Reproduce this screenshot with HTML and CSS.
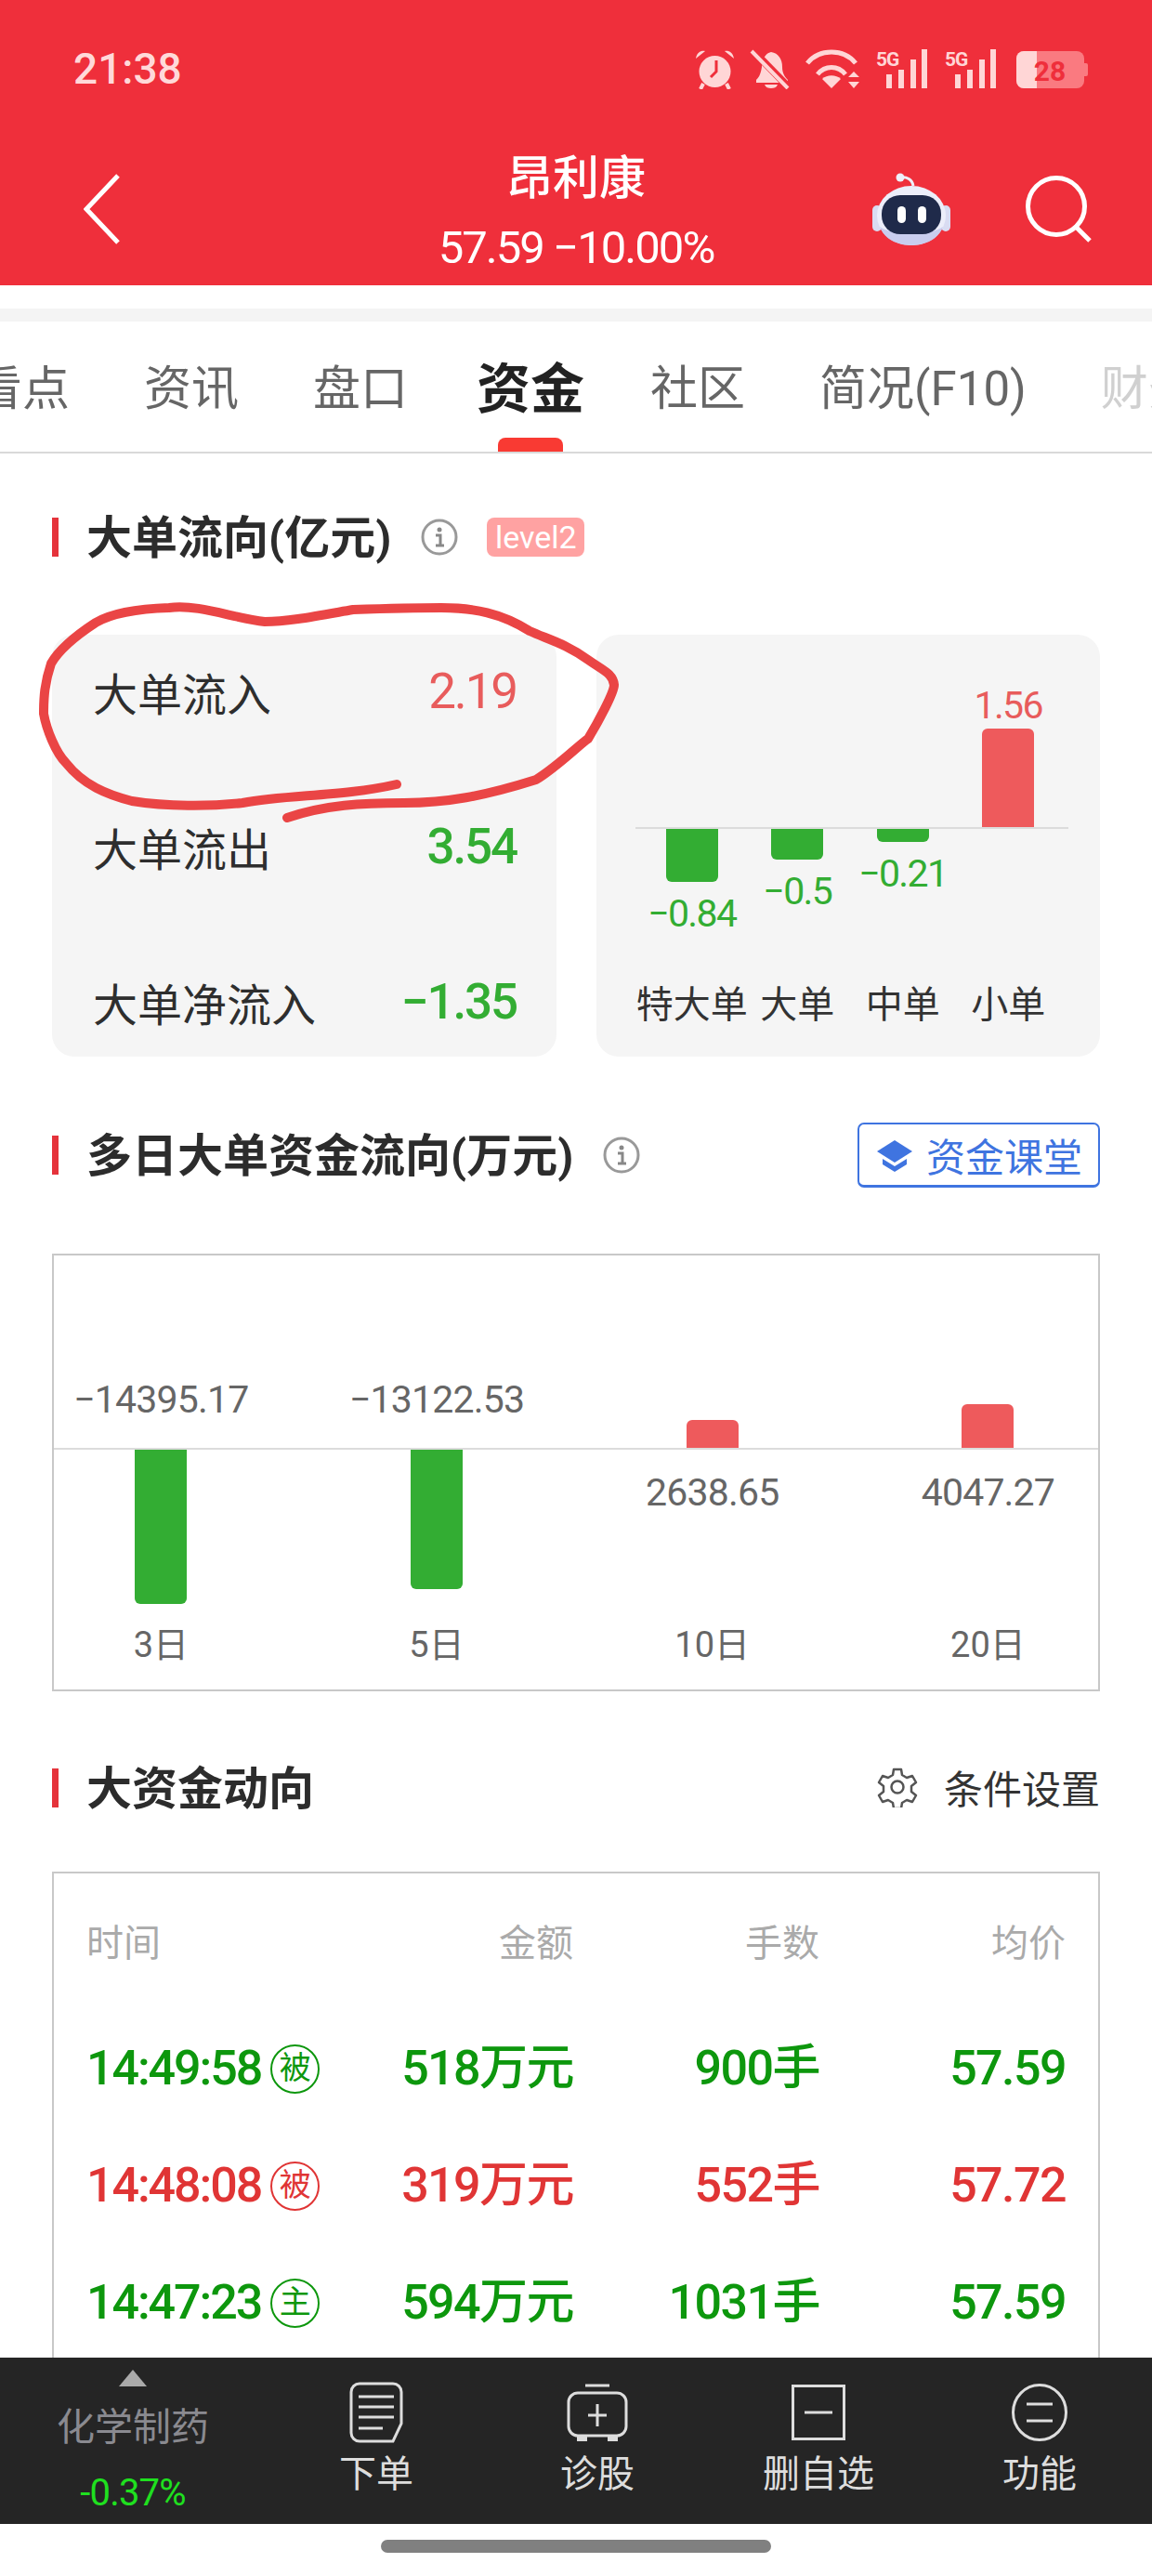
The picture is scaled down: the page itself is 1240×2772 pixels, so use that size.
FILE: index.html
```html
<!DOCTYPE html>
<html lang="zh-CN">
<head>
<meta charset="utf-8">
<title>昂利康</title>
<link rel="stylesheet" href="styles.css">
</head>
<body>
<div class="page">
  <header class="hero">
    <div class="status">
      <span class="clock">21:38</span>
      <div class="status-icons">
        <svg class="si" width="43" height="43" viewBox="0 0 43 43"><circle cx="21.5" cy="24" r="17" fill="#ffd6d6"/><path d="M1 10C2 3 7 1 11 2ZM42 10C41 3 36 1 32 2Z" fill="#ffd6d6"/><path d="M9 37 6 43M34 37 37 43" stroke="#ffd6d6" stroke-width="4"/><path d="M23 12V24L17 30" fill="none" stroke="#ef2f3b" stroke-width="3"/></svg>
        <svg class="si" width="43" height="43" viewBox="0 0 43 43"><path d="M23 3c8 1 12 8 12 16 0 6 2 10 6 14v3H7v-3c4-4 5-8 6-14 0-8 4-15 10-16Z" fill="#ffd6d6"/><path d="M16 38h14c-1 3-4 4-7 4s-6-1-7-4Z" fill="#ffd6d6"/><path d="M3 1 42 41" stroke="#ef2f3b" stroke-width="8"/><path d="M2 2 41 42" stroke="#ffd6d6" stroke-width="4"/></svg>
        <svg class="si" width="61" height="43" viewBox="0 0 61 43"><path d="M3 15C16 -1 42 -1 55 15M14 27C22 17 36 17 44 27" fill="none" stroke="#ffd6d6" stroke-width="5"/><path d="M19 32C24 27 34 27 39 32L29 42Z" fill="#ffd6d6"/><path d="M53 24 59 30H47ZM53 42 47 35H59Z" fill="#ffd6d6"/></svg>
        <svg class="si" width="56" height="43" viewBox="0 0 56 43"><text class="fiveg" x="0" y="18">5G</text><path d="M11 27h6v15h-6zM24 22h6v20h-6zM37 11h6v31h-6zM49 0h6v42h-6z" fill="#ffd6d6"/></svg>
        <svg class="si" width="58" height="43" viewBox="-2 0 58 43"><text class="fiveg" x="0" y="18">5G</text><path d="M11 27h6v15h-6zM24 22h6v20h-6zM37 11h6v31h-6zM49 0h6v42h-6z" fill="#ffd6d6"/></svg>
        <svg class="si" width="82" height="43" viewBox="0 0 82 43"><rect x="5" y="2" width="73" height="40" rx="8" fill="#fa7a80"/><path d="M13 2h14v40H13a8 8 0 0 1-8-8V10a8 8 0 0 1 8-8Z" fill="#ffd6d6"/><path d="M78 15h2a2 2 0 0 1 2 2v10a2 2 0 0 1-2 2h-2Z" fill="#fa7a80"/><text class="batt" x="41" y="34" text-anchor="middle">28</text></svg>
      </div>
    </div>
    <div class="navbar">
      <svg class="back" width="40" height="76" viewBox="0 0 40 76"><path d="M37 2 3 38 37 74" fill="none" stroke="#fff" stroke-width="5"/></svg>
      <div class="stock">
        <div class="stock-name">昂利康</div>
        <div class="stock-price">57.59 −10.00%</div>
      </div>
      <div class="nav-right">
        <svg width="84" height="78" viewBox="0 0 84 78"><circle cx="30" cy="5" r="4.500" fill="#eef0fb"/><path d="M30 5c7-1 13 2 14 9" fill="none" stroke="#eef0fb" stroke-width="3"/><rect x="0" y="35" width="10" height="28" rx="5" fill="#d9dcf2"/><rect x="74" y="35" width="10" height="28" rx="5" fill="#d9dcf2"/><ellipse cx="42" cy="46" rx="37" ry="32" fill="#eceefa"/><path d="M8 58c5 14 20 20 34 20s29-6 34-20c-10 9-58 9-68 0Z" fill="#c9cdee"/><rect x="10" y="24" width="64" height="42" rx="20" fill="#1f2a4a"/><rect x="27" y="36" width="9" height="18" rx="4.500" fill="#fff"/><rect x="49" y="36" width="9" height="18" rx="4.500" fill="#fff"/></svg>
        <svg width="72" height="72" viewBox="0 0 72 72"><circle cx="33" cy="33" r="30.500" fill="none" stroke="#fff" stroke-width="5"/><path d="M54 55 69 70" stroke="#fff" stroke-width="5"/></svg>
      </div>
    </div>
  </header>

  <div class="strip"></div>

  <nav class="tabs">
    <span class="tab">看点</span>
    <span class="tab">资讯</span>
    <span class="tab">盘口</span>
    <span class="tab tab-on">资金</span>
    <span class="tab">社区</span>
    <span class="tab">简况(F10)</span>
    <span class="tab tab-fade">财务</span>
  </nav>

  <section class="sec sec-first">
    <div class="head">
      <h2 class="head-title">大单流向(亿元)</h2>
      <svg class="info" width="40" height="40" viewBox="0 0 40 40"><circle cx="20" cy="20" r="18" fill="none" stroke="#999" stroke-width="3"/><circle cx="20" cy="12" r="2.500" fill="#888"/><path d="M16 18h5v11M16 29h9" fill="none" stroke="#888" stroke-width="3"/></svg>
      <span class="badge">level2</span>
    </div>
    <div class="cards">
      <div class="card card-list">
        <div class="stat"><span>大单流入</span><b class="v-red">2.19</b></div>
        <div class="stat"><span>大单流出</span><b class="v-green">3.54</b></div>
        <div class="stat"><span>大单净流入</span><b class="v-green">−1.35</b></div>
      </div>
      <div class="card card-chart">
        <div class="mini-row mini-up">
          <div class="mini-cell"></div>
          <div class="mini-cell"></div>
          <div class="mini-cell"></div>
          <div class="mini-cell"><span class="mini-val c-red">1.56</span><i class="bar bar-red" style="height:106px"></i></div>
        </div>
        <div class="mini-line"></div>
        <div class="mini-row mini-down">
          <div class="mini-cell"><i class="bar bar-green" style="height:57px"></i><span class="mini-val c-green">−0.84</span></div>
          <div class="mini-cell"><i class="bar bar-green" style="height:33px"></i><span class="mini-val c-green">−0.5</span></div>
          <div class="mini-cell"><i class="bar bar-green" style="height:14px"></i><span class="mini-val c-green">−0.21</span></div>
          <div class="mini-cell"></div>
        </div>
        <div class="mini-row mini-axis">
          <span>特大单</span><span>大单</span><span>中单</span><span>小单</span>
        </div>
      </div>
    </div>
  </section>

  <section class="sec sec-second">
    <div class="head">
      <h2 class="head-title">多日大单资金流向(万元)</h2>
      <svg class="info" width="40" height="40" viewBox="0 0 40 40"><circle cx="20" cy="20" r="18" fill="none" stroke="#999" stroke-width="3"/><circle cx="20" cy="12" r="2.500" fill="#888"/><path d="M16 18h5v11M16 29h9" fill="none" stroke="#888" stroke-width="3"/></svg>
      <a class="course">
        <svg width="40" height="40" viewBox="0 0 40 40"><path d="M20 4 39 16 20 28 1 16Z" fill="#3f74e0"/><path d="M7 24v6l13 8 13-8v-6L20 32Z" fill="#3f74e0"/></svg>
        <span>资金课堂</span>
      </a>
    </div>
    <div class="multi">
      <div class="multi-row multi-up">
        <div class="multi-cell"><span class="multi-val multi-neg">−14395.17</span></div>
        <div class="multi-cell"><span class="multi-val multi-neg">−13122.53</span></div>
        <div class="multi-cell"><i class="bar bar-red" style="height:30px"></i></div>
        <div class="multi-cell"><i class="bar bar-red" style="height:47px"></i></div>
      </div>
      <div class="multi-line"></div>
      <div class="multi-row multi-down">
        <div class="multi-cell"><i class="bar bar-green" style="height:166px"></i></div>
        <div class="multi-cell"><i class="bar bar-green" style="height:150px"></i></div>
        <div class="multi-cell"><span class="multi-val multi-pos">2638.65</span></div>
        <div class="multi-cell"><span class="multi-val multi-pos">4047.27</span></div>
      </div>
      <div class="multi-row multi-axis">
        <span>3日</span><span>5日</span><span>10日</span><span>20日</span>
      </div>
    </div>
  </section>

  <section class="sec sec-third">
    <div class="head">
      <h2 class="head-title">大资金动向</h2>
      <div class="setting">
        <svg width="44" height="44" viewBox="0 0 44 44"><path d="M18 3h8l1 6 5 3 6-2 4 7-5 4v6l5 4-4 7-6-2-5 3-1 6h-8l-1-6-5-3-6 2-4-7 5-4v-6l-5-4 4-7 6 2 5-3Z" fill="none" stroke="#555" stroke-width="2.500" stroke-linejoin="round"/><circle cx="22" cy="22" r="6.500" fill="none" stroke="#555" stroke-width="2.500"/></svg>
        <span>条件设置</span>
      </div>
    </div>
    <div class="flow">
      <div class="flow-row flow-head"><span class="cell-l">时间</span><span>金额</span><span>手数</span><span>均价</span></div>
      <div class="flow-row flow-data c-flow-green"><span class="cell-l">14:49:58<em class="tag">被</em></span><span>518万元</span><span>900手</span><span>57.59</span></div>
      <div class="flow-row flow-data c-flow-red"><span class="cell-l">14:48:08<em class="tag">被</em></span><span>319万元</span><span>552手</span><span>57.72</span></div>
      <div class="flow-row flow-data c-flow-green"><span class="cell-l">14:47:23<em class="tag">主</em></span><span>594万元</span><span>1031手</span><span>57.59</span></div>
    </div>
  </section>

  <svg class="scribble" width="1240" height="2772" viewBox="0 0 1240 2772"><path d="M309 880C350 866 390 864 435 864S520 857 577 839C600 825 625 800 633 795C645 775 661 745 661 737C660 725 650 722 633 710C610 693 590 688 570 679C540 660 510 654 475 654C440 654 410 655 380 656C340 663 310 669 285 669C250 665 215 650 182 654C150 655 120 660 103 670C80 685 63 700 55 714C48 735 47 750 47 768C50 785 60 810 71 821C90 845 115 855 142 862C180 868 225 868 261 864C310 855 370 857 427 844" fill="none" stroke="#ea4545" stroke-width="10" stroke-linecap="round"/></svg>

  <footer class="foot">
    <div class="tabbar">
      <div class="sector">
        <i class="sector-arrow"></i>
        <span class="sector-name">化学制药</span>
        <span class="sector-val">-0.37%</span>
      </div>
      <div class="tb-item">
        <svg class="tb-icon" width="58" height="66" viewBox="0 0 58 66"><path d="M11 2h36a9 9 0 0 1 9 9v34l-9 19H11a9 9 0 0 1-9-9V11a9 9 0 0 1 9-9Z" fill="none" stroke="#ddd" stroke-width="3"/><path d="M10 16h38M10 27h38M10 38h38M10 50h26" stroke="#ddd" stroke-width="3"/></svg>
        <span>下单</span>
      </div>
      <div class="tb-item">
        <svg class="tb-icon" width="66" height="62" viewBox="0 0 66 62"><path d="M20 2h26" stroke="#ddd" stroke-width="3"/><rect x="2" y="10" width="62" height="46" rx="10" fill="none" stroke="#ddd" stroke-width="3"/><path d="M33 22v24M23 34h20" stroke="#ddd" stroke-width="3"/><path d="M11 56h11v6H11zM44 56h11v6H44z" fill="#ddd"/></svg>
        <span>诊股</span>
      </div>
      <div class="tb-item">
        <svg class="tb-icon" width="58" height="60" viewBox="0 0 58 60"><rect x="1.500" y="1.500" width="55" height="57" fill="none" stroke="#ddd" stroke-width="3"/><path d="M14 30h30" stroke="#ddd" stroke-width="3"/></svg>
        <span>删自选</span>
      </div>
      <div class="tb-item">
        <svg class="tb-icon" width="60" height="62" viewBox="0 0 60 62"><ellipse cx="30" cy="31" rx="28.500" ry="29.500" fill="none" stroke="#ddd" stroke-width="3"/><path d="M16 22h28M16 40h28" stroke="#ddd" stroke-width="3"/></svg>
        <span>功能</span>
      </div>
    </div>
    <div class="home"><i class="home-bar"></i></div>
  </footer>
</div>
</body>
</html>
```
FILE: styles.css
```css
* { box-sizing: border-box; }
html, body { margin: 0; padding: 0; background: #fff; }
body { font-family: Roboto, "Noto Sans CJK SC", sans-serif; color: #333; }
svg { display: block; flex: none; }
i, em { font-style: normal; display: block; }
h2 { margin: 0; }

.page { position: relative; width: 1240px; height: 2772px; overflow: hidden; background: #fff; }

.hero { height: 307px; background: #ef2f3b; color: #fff; }
.status { height: 148px; display: flex; align-items: center; justify-content: space-between; padding: 0 69px 0 79px; }
.clock { font-size: 46px; font-weight: 500; color: #ffd9d9; }
.status-icons { display: flex; gap: 16px; align-items: center; }
.fiveg { font: 700 21px Roboto, sans-serif; fill: #ffd6d6; letter-spacing: -1px; }
.batt { font: 700 30px Roboto, sans-serif; fill: #ef2f3b; }

.navbar { height: 159px; display: grid; grid-template-columns: 1fr auto 1fr; padding: 0 64px 15px 64px; align-items: center; }
.back { justify-self: start; margin-left: 26px; }
.stock { align-self: start; padding-top: 4px; text-align: center; }
.stock-name { font-size: 50px; line-height: 80px; font-weight: 500; }
.stock-price { font-size: 49px; line-height: 70px; letter-spacing: -.04em; }
.nav-right { justify-self: end; display: flex; align-items: center; gap: 81px; }

.strip { height: 14px; margin-top: 25px; background: #f4f4f4; }

.tabs { display: flex; gap: 80px; height: 142px; margin-left: -27px; border-bottom: 2px solid #d9d9d9; width: 1267px; overflow: hidden; }
.tab { position: relative; flex: none; font-size: 51px; line-height: 146px; height: 140px; color: #666; }
.tab-on { font-size: 58px; font-weight: 700; color: #222; margin: 0 -9px 0 -6px; }
.tab-on::after { content: ""; position: absolute; left: 23px; bottom: 0; width: 70px; height: 15px; border-radius: 8px 8px 0 0; background: #f93a33; }
.tab-fade { color: #d0d0d0; }

.sec { padding: 0 56px; }
.sec-first { padding-top: 69px; }
.sec-second { padding-top: 85px; }
.sec-third { padding-top: 83px; }

.head { position: relative; display: flex; align-items: center; height: 42px; padding-left: 37px; }
.head::before { content: ""; position: absolute; left: 0; top: 0; width: 7px; height: 42px; background: #e5333b; }
.head-title { font-size: 49px; line-height: 42px; padding-top: 3px; font-weight: 700; color: #2c2c2c; white-space: nowrap; }
.info { margin-left: 32px; }
.badge { margin-left: 31px; width: 105px; height: 42px; border-radius: 8px; background: #ff9e9e; color: #fff; font-size: 34px; line-height: 42px; text-align: center; opacity: .95; }

.cards { display: grid; grid-template-columns: 543px 542px; gap: 43px; margin-top: 84px; height: 454px; }
.card { background: #f5f5f5; border-radius: 24px; }
.card-list { padding: 19px 43px 0 44px; display: flex; flex-direction: column; gap: 83px; }
.stat { display: flex; justify-content: space-between; align-items: center; height: 84px; font-size: 48px; color: #2e2e2e; }
.stat b { font-size: 53px; letter-spacing: -.04em; }
.v-red { color: #e85c5c; font-weight: 400; }
.v-green { color: #33ad33; font-weight: 500; }

.card-chart { padding: 0 34px 0 42px; }
.mini-row { display: grid; grid-template-columns: repeat(4, 113.500px); padding-left: 4px; }
.mini-cell { display: flex; flex-direction: column; align-items: center; }
.mini-up { height: 207px; }
.mini-up .mini-cell { justify-content: flex-end; }
.mini-line { height: 2px; background: #dcdcdc; }
.mini-down { height: 163px; }
.mini-val { font-size: 41px; line-height: 50px; white-space: nowrap; letter-spacing: -.04em; }
.mini-axis { font-size: 40px; line-height: 50px; color: #333; padding-top: 2px; }
.mini-axis span { display: flex; justify-content: center; white-space: nowrap; }
.c-red { color: #e85c5c; }
.c-green { color: #33ad33; }
.mini-down .mini-val { margin-top: 9px; }

.bar { width: 56px; flex: none; }
.bar-red { background: #ee5a5c; border-radius: 6px 6px 0 0; }
.bar-green { background: #33ad33; border-radius: 0 0 6px 6px; }

.course { display: flex; align-items: center; gap: 14px; height: 70px; width: 261px; margin-left: auto; padding-left: 18px; border: 2px solid #3f74e0; border-bottom-width: 3px; border-radius: 7px; font-size: 42px; color: #3f74e0; white-space: nowrap; }

.multi { margin-top: 85px; height: 471px; border: 2px solid #c8c8c8; }
.multi-row { display: grid; grid-template-columns: repeat(4, 296.700px); margin-left: -33px; }
.multi-cell { display: flex; flex-direction: column; align-items: center; }
.multi-up { height: 207px; }
.multi-up .multi-cell { justify-content: flex-end; }
.multi-line { height: 2px; background: #dcdcdc; }
.multi-down { height: 185px; }
.multi-val { font-size: 41px; line-height: 50px; color: #666; white-space: nowrap; letter-spacing: -.02em; }
.multi-neg { margin-bottom: 27px; }
.multi-pos { margin-top: 21px; }
.multi-axis { font-size: 38px; line-height: 50px; color: #666; text-align: center; }

.setting { margin-left: auto; display: flex; align-items: center; gap: 28px; font-size: 42px; color: #333; margin-top: -3px; }

.flow { margin-top: 69px; padding: 51px 35px 120px; border: 2px solid #c8c8c8; }
.flow-row { display: grid; grid-template-columns: 254px 270px 265px 265px; text-align: right; white-space: nowrap; }
.flow-head { font-size: 40px; line-height: 50px; color: #aaa; margin-bottom: 79px; }
.flow-data { font-size: 52px; line-height: 60px; font-weight: 500; letter-spacing: -.03em; margin-bottom: 66px; }
.cell-l { display: flex; align-items: center; text-align: left; }
.flow-data .cell-l { letter-spacing: -.04em; }
.c-flow-green { color: #0d970d; }
.c-flow-red { color: #e03535; }
.tag { flex: none; width: 53px; height: 53px; margin-left: 10px; border: 2.500px solid currentColor; border-radius: 50%; font-size: 34px; line-height: 46px; font-weight: 400; text-align: center; letter-spacing: 0; }

.scribble { position: absolute; left: 0; top: 0; pointer-events: none; }

.foot { position: absolute; left: 0; right: 0; bottom: 0; }
.tabbar { height: 179px; display: grid; grid-template-columns: 286px repeat(4, 238px); background: #252525; }
.sector { display: flex; flex-direction: column; align-items: center; padding-top: 13px; }
.sector-arrow { width: 0; height: 0; border-left: 15.500px solid transparent; border-right: 15.500px solid transparent; border-bottom: 18px solid #aaa; }
.sector-name { margin-top: 19px; font-size: 41px; line-height: 50px; color: #8a8a90; }
.sector-val { margin-top: 21px; font-size: 40px; line-height: 50px; letter-spacing: -.02em; color: #1fe01f; }
.tb-item { display: flex; flex-direction: column; align-items: center; padding-top: 26px; font-size: 40px; line-height: 50px; color: #ddd; }
.tb-icon { height: 66px; margin-bottom: 9px; }
.home { height: 56px; padding-top: 17px; display: flex; justify-content: center; background: #fff; }
.home-bar { width: 420px; height: 14px; border-radius: 7px; background: #808080; }
```
